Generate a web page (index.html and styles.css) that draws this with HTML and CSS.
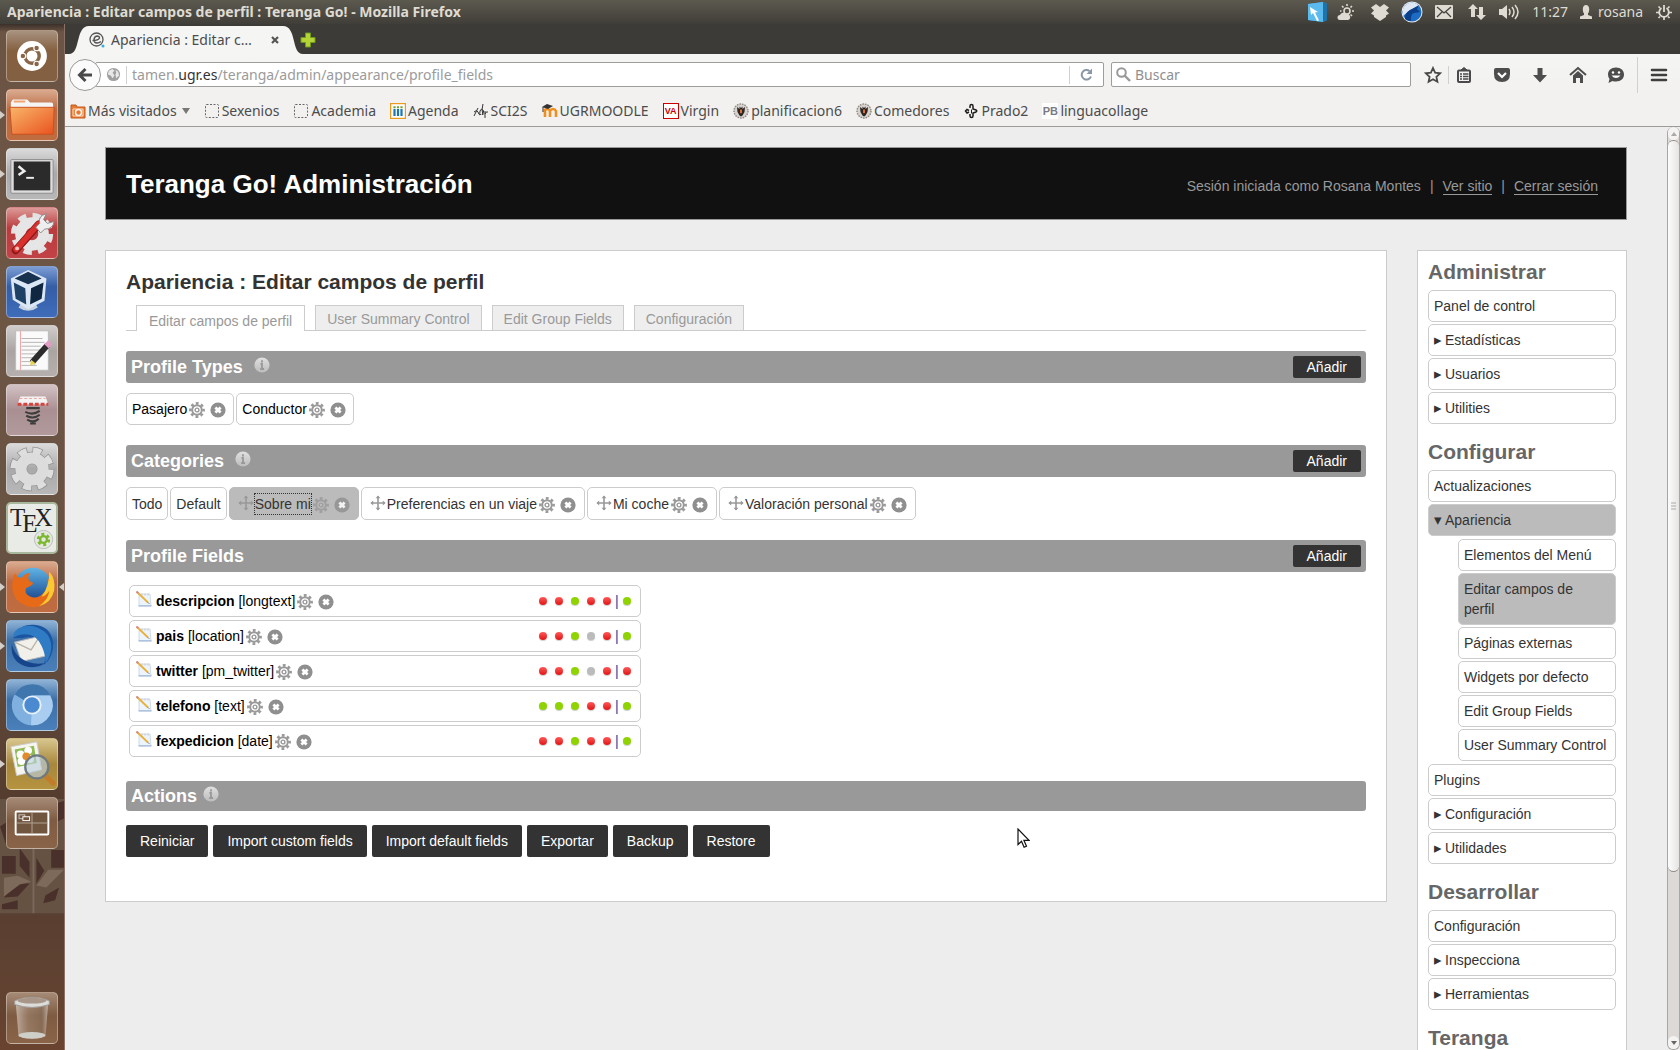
FILE: index.html
```html
<!DOCTYPE html>
<html lang="es">
<head>
<meta charset="utf-8">
<title>Apariencia : Editar campos de perfil : Teranga Go!</title>
<link rel="stylesheet" href="styles.css">
</head>
<body>
<svg class="defs" aria-hidden="true">
  <defs>
    <linearGradient id="gInfo" x1="0" y1="0" x2="0" y2="1"><stop offset="0" stop-color="#e0e0e0"/><stop offset="1" stop-color="#bcbcbc"/></linearGradient>
    <linearGradient id="gOrange" x1="0" y1="0" x2="1" y2="1"><stop offset="0" stop-color="#f9b56a"/><stop offset="1" stop-color="#e9531f"/></linearGradient>
    <linearGradient id="gBlue" x1="0" y1="0" x2="0" y2="1"><stop offset="0" stop-color="#5fb3e4"/><stop offset="1" stop-color="#123c86"/></linearGradient>
    <linearGradient id="gCup" x1="0" y1="0" x2="1" y2="0"><stop offset="0" stop-color="#d8d0c8" stop-opacity=".7"/><stop offset=".4" stop-color="#b09a86" stop-opacity=".4"/><stop offset=".8" stop-color="#8d7763" stop-opacity=".5"/><stop offset="1" stop-color="#d8d0c8" stop-opacity=".7"/></linearGradient>
  </defs>
  <symbol id="i-gear" viewBox="0 0 16 16"><circle cx="8" cy="8" r="6.6" fill="none" stroke="#999" stroke-width="2.6" stroke-dasharray="2.8 2.384" stroke-dashoffset="1.4"/><circle cx="8" cy="8" r="4.8" fill="none" stroke="#999" stroke-width="2"/><circle cx="8" cy="8" r="1.9" fill="none" stroke="#999" stroke-width="1.4"/></symbol>
  <symbol id="i-del" viewBox="0 0 16 16"><circle cx="8" cy="8" r="7.6" fill="#8f8f8f"/><path d="M5.4 5.4l5.2 5.2M10.6 5.4l-5.2 5.2" stroke="#fff" stroke-width="2.8"/></symbol>
  <symbol id="i-info" viewBox="0 0 16 16"><circle cx="8" cy="8" r="7.6" fill="url(#gInfo)"/><path d="M8 3.2v2.2M6.4 6.8H8v5M6.2 12h3.800" stroke="#999" stroke-width="1.8" fill="none"/></symbol>
  <symbol id="i-move" viewBox="0 0 16 16"><path d="M8 1v14M1 8h14" stroke="#999" stroke-width="1.6"/><path d="M5.6 3.2L8 .4l2.4 2.8zM5.6 12.8L8 15.6l2.4-2.8zM3.2 5.6L.4 8l2.8 2.4zM12.8 5.6L15.6 8l-2.8 2.4z" fill="#999"/></symbol>
  <symbol id="i-note" viewBox="0 0 16 16"><path d="M3 3h11l1 12H3z" fill="#eef4fb" stroke="#c5d3e4" stroke-width=".8"/><path d="M2.5 14.8h13" stroke="#a8bfdc" stroke-width="1.4"/><path d="M6 2.5v2M9 2.5v2M12 2.5v2" stroke="#c9c9c9"/><path d="M1 1l11 10.5" stroke="#e8b13c" stroke-width="1.8"/><path d="M.4.4l1.8 1.8" stroke="#d98b8b" stroke-width="2"/><path d="M12 11.5l1.2 1.2" stroke="#555"/></symbol>
  <symbol id="i-crest" viewBox="0 0 16 16"><circle cx="8" cy="8" r="7.5" fill="#d6d2ce"/><circle cx="8" cy="8" r="7" fill="none" stroke="#8d8782" stroke-width="1.4" stroke-dasharray="1.4 1.2"/><path d="M4 4l2.500 2V3.500L8 5l1.500-1.500V6L12 4l-.5 5-2 3.500L8 13.500l-1.500-1L4.500 9z" fill="#2d2522"/><path d="M7 6.500h2v3l-1 1-1-1z" fill="#d9703a"/></symbol>
  <symbol id="i-blank" viewBox="0 0 16 16"><rect x="1.500" y="1.500" width="13" height="13" rx="1" fill="none" stroke="#666" stroke-dasharray="2 1.500"/></symbol>
</svg>

<header class="panel">
  <div class="panel-title">Apariencia : Editar campos de perfil : Teranga Go! - Mozilla Firefox</div>
  <div class="tray">
    <svg width="22" height="22" viewBox="0 0 22 22"><path d="M2 3l15-2 4 2v16l-4 2-15-2z" fill="#2f9bd8"/><path d="M2 3l15-2v20L2 19z" fill="#5bbbee"/><path d="M17 1l4 2v16l-4 2z" fill="#1d74ad"/><path d="M4 6l8 5-3 .5 4 8-2 .5-4-8-2 2z" fill="#fff"/></svg>
    <svg width="18" height="18" viewBox="0 0 18 18" class="t-weather"><circle cx="10" cy="8" r="3" fill="none" stroke="#dfdbd2" stroke-width="1.600"/><path d="M10 1v2M5 3l1.500 1.500M15 3l-1.500 1.500M17 8h-2M15 13l-1.500-1.500M3 8h1.500" stroke="#dfdbd2" stroke-width="1.600"/><path d="M3 17a2.500 2.500 0 010-5 3.500 3.500 0 016-1 3 3 0 012 6z" fill="#dfdbd2"/></svg>
    <svg width="18" height="18" viewBox="0 0 18 18" class="t-box"><path d="M5 1l4 3 4-3 5 3.500-3 3 3 3-3 2V14l-6 4-6-4v-1.500l-3-2 3-3-3-3z" fill="#dfdbd2"/></svg>
    <svg width="22" height="22" viewBox="0 0 22 22" class="t-wolf"><circle cx="11" cy="11" r="10.500" fill="#e6edf5"/><circle cx="11" cy="11" r="9.500" fill="#1c6cc4"/><path d="M2 8a9.500 9.500 0 0112-6c2 1 3 2 4 3L9 9l-7 6z" fill="#dfe8f2"/><path d="M4 18c0-6 3-8 7-10l7-4-2 4 3 3-6 1c-3 1-3 4-3 8-2 0-5-1-6-2z" fill="#0b3f8a"/></svg>
    <svg width="18" height="14" viewBox="0 0 18 14" class="t-mail"><rect width="18" height="14" rx="1" fill="#dfdbd2"/><path d="M2 2l7 6 7-6M2 12l5-5M16 12l-5-5" stroke="#45433d" stroke-width="1.300" fill="none"/></svg>
    <svg width="18" height="18" viewBox="0 0 18 18" class="t-net"><path d="M5 1l5 5H7v8H3V6H0zM13 17l-5-5h3V4h4v8h3z" fill="#dfdbd2"/></svg>
    <svg width="20" height="16" viewBox="0 0 20 16" class="t-vol"><path d="M0 5h3l5-4v14l-5-4H0z" fill="#dfdbd2"/><path d="M10 5q2 3 0 6M13 3q4 5 0 10M16 1q6 7 0 14" stroke="#dfdbd2" stroke-width="1.500" fill="none"/></svg>
    <span class="t-clock">11:27</span>
    <svg width="14" height="14" viewBox="0 0 14 14" class="t-user"><ellipse cx="7" cy="4.500" rx="3.200" ry="4.500" fill="#dfdbd2"/><path d="M5 8h4v2l4 1.500V14H1v-2.500L5 10z" fill="#dfdbd2"/></svg>
    <span class="t-name">rosana</span>
    <svg width="16" height="16" viewBox="0 0 16 16" class="t-power"><path d="M5.500 4a4.800 4.800 0 105 0M8 1v7" fill="none" stroke="#dfdbd2" stroke-width="1.800"/><path d="M2.500 2.500L4 4M13.500 2.500L12 4M0 8.500h3M13 8.500h3M2.500 14L4 12.500M13.500 14L12 12.500M8 13v3" stroke="#dfdbd2" stroke-width="1.700"/></svg>
  </div>
</header>

<div class="desktop">
  <nav class="dock" aria-label="Lanzador">
    <svg class="mosaic" viewBox="0 0 65 120" aria-hidden="true"><path d="M0 0h65v116H0z" fill="#665243"/><path d="M2 58h14v18H2zM20 50l10 14v16l-10-12zM52 52h13v18H52zM37 60l8 13-8 13zM14 86l-10 14 14-1 12-13zM46 98l14-8-4 13-12 3zM2 107l16-4v9H2zM0 28l12-8 6 18-12 8zM34 16l14 10-6 18-10-12zM52 6l13-4v18l-9 4z" fill="#49302a"/><path d="M18 78l14 6-12 3-16 12V80zM37 88l12-16h16l-18 18zM18 20l14-12v22l-10 12z" fill="#7d6a5b"/><path d="M34 4v112" stroke="#7b6859" stroke-width="2"/></svg>
    <button class="tile t-brown" aria-label="Inicio"><svg viewBox="0 0 52 52"><circle cx="26" cy="26" r="15.500" fill="#fff"/><circle cx="26" cy="26" r="7.500" fill="none" stroke="#8a6648" stroke-width="3.600"/><g fill="#8a6648" stroke="#fff" stroke-width="1.200"><circle cx="16.500" cy="26" r="2.900"/><circle cx="30.800" cy="17.600" r="2.900"/><circle cx="30.800" cy="34.400" r="2.900"/></g></svg></button>
    <button class="tile t-orange run" aria-label="Archivos"><svg viewBox="0 0 52 52"><path d="M4 13l2-3h15l3 3h22q2 0 2 2v4H4z" fill="#f5f5f5"/><path d="M7 12h12" stroke="#f2a36c" stroke-width="2"/><path d="M3 18h46l-1 28H5z" fill="url(#gOrange)" stroke="#c9501c"/></svg></button>
    <button class="tile t-grey run" aria-label="Terminal"><svg viewBox="0 0 52 52"><rect x="4" y="11" width="44" height="35" rx="1" fill="#ddd" stroke="#8a8a8a"/><rect x="7" y="13" width="38" height="30" fill="#2b2b2b"/><path d="M12 18l6 5-6 4" stroke="#eee" stroke-width="2.600" fill="none"/><path d="M20 30h8" stroke="#eee" stroke-width="2"/></svg></button>
    <button class="tile t-red" aria-label="Configuración del sistema"><svg viewBox="0 0 52 52"><circle cx="26" cy="27" r="18" fill="none" stroke="#e2e2e2" stroke-width="8" stroke-dasharray="8 6.137"/><circle cx="26" cy="27" r="12" fill="none" stroke="#e6e6e6" stroke-width="11"/><path d="M9 44l24-27" stroke="#8f1516" stroke-width="8" stroke-linecap="round"/><path d="M9.500 43l23-26" stroke="#d8302c" stroke-width="6" stroke-linecap="round"/><path d="M30 20l4-4q-2-8 7-10l-3 6 4 4 7-2q-1 8-10 8l-4 4z" fill="#eee" stroke="#888"/><circle cx="10.500" cy="42" r="2" fill="#f6c5c0"/></svg></button>
    <button class="tile t-blue" aria-label="VirtualBox"><svg viewBox="0 0 52 52"><path d="M17 34l-5 8q10 7 20 0l-5-8z" fill="#c6d3e2"/><path d="M22 3l19 9-2 23-17 9L6 34 4 12z" fill="#dbe7f4"/><path d="M22 5l14 7-14 6L8 12z" fill="#16324f"/><path d="M7 16l12 6 1 17-11-6z" fill="#1d4266"/><path d="M38 16l-13 6-1 17 12-6z" fill="#0f2740"/></svg></button>
    <button class="tile t-silver" aria-label="Editor de textos"><svg viewBox="0 0 52 52"><rect x="9" y="5" width="34" height="41" fill="#fafafa" stroke="#bbb"/><path d="M14 5v41" stroke="#f0a0a0"/><path d="M15 13h22M15 17h24M15 21h20M15 25h23M15 29h16M15 33h15M15 37h14M15 41h16" stroke="#b4b4b4"/><path d="M26 38l16-18" stroke="#2c2c2c" stroke-width="6"/><path d="M41 21l4-4" stroke="#e39ac4" stroke-width="6"/><path d="M24 41l1-6 5 4z" fill="#e6d34f"/></svg></button>
    <button class="tile t-pink" aria-label="Resorte"><svg viewBox="0 0 52 52"><path d="M14 12h26l3 8H11z" fill="#f3f3f3"/><path d="M11 20h32" stroke="#d9423c" stroke-width="3" stroke-dasharray="4 2"/><path d="M13 14h27" stroke="#efa09c" stroke-dasharray="3 2"/><path d="M20 24h14M19 28q8 4 15-1M20 32q8 4 14-1M21 36q7 4 12-1M24 40h6" stroke="#3d3d3d" stroke-width="2.200" fill="none"/></svg></button>
    <button class="tile t-grey" aria-label="Preferencias"><svg viewBox="0 0 52 52"><circle cx="26" cy="26" r="19" fill="none" stroke="#8f8f8f" stroke-width="8.500" stroke-dasharray="9.500 5.423"/><circle cx="26" cy="26" r="11.500" fill="none" stroke="#999" stroke-width="13"/><circle cx="26" cy="26" r="18.500" fill="none" stroke="#dedede" stroke-width="8" stroke-dasharray="8 6.530" stroke-dashoffset="-.6"/><circle cx="26" cy="26" r="11.500" fill="none" stroke="#dcdcdc" stroke-width="11.500"/></svg></button>
    <button class="tile t-tex" aria-label="Texmaker"><span class="tex">T<span class="tex-e">E</span>X</span><svg viewBox="0 0 52 52"><circle cx="38" cy="38" r="9.500" fill="#e4e8e0" stroke="#bbb"/><circle cx="38" cy="38" r="5.500" fill="none" stroke="#7cb82f" stroke-width="3" stroke-dasharray="3 2.760"/><circle cx="38" cy="38" r="3.500" fill="none" stroke="#7cb82f" stroke-width="2.400"/></svg></button>
    <button class="tile t-orange run active" aria-label="Firefox"><svg viewBox="0 0 52 52"><circle cx="27" cy="25" r="19" fill="url(#gBlue)"/><path d="M8 12q-6 16 2 27 12 12 27 6 12-6 10-20-1-5-5-9 2 10-4 16-6 7-14 4-7-4-4-9 4-1 7-4 0-3-4-3-2-5 1-9-6 1-9 6-4-1-7-5z" fill="#e66a17"/><path d="M44 10q7 8 5 20-3 13-16 16 10-6 11-16-4 6-8 6 8-10 8-26z" fill="#f9c832"/></svg></button>
    <button class="tile t-blue2 run" aria-label="Thunderbird"><svg viewBox="0 0 52 52"><path d="M6 18Q12 3 28 4q17 1 20 18 1 15-10 24 4-12 0-20-8-12-22-8z" fill="#1c56a3"/><path d="M8 22l26-6 8 20-27 6z" fill="#f2f0ea" stroke="#bbb"/><path d="M8 22l17 8 9-14" fill="none" stroke="#b8b3a8" stroke-width="1.300"/><path d="M6 18q0-9 10-12 14-4 26 8 9 14-2 30 0-10-4-18-6-14-20-12-7 1-10 4z" fill="#2f7cc5"/><path d="M5 24q-2 18 14 23 12 3 20-3-10 1-16-1Q8 38 5 24z" fill="#17458b"/></svg></button>
    <button class="tile t-blue2" aria-label="Chromium"><svg viewBox="0 0 52 52"><circle cx="26" cy="26" r="21" fill="#7fb0e0"/><path d="M26 26L8 15A21 21 0 0145 16H26z" fill="#3f76ae"/><path d="M26 26l-1 21a21 21 0 0020-31H28z" fill="#a9cdf0"/><circle cx="26" cy="26" r="10" fill="#e8f1fa"/><circle cx="26" cy="26" r="8" fill="#4b8ad0"/></svg></button>
    <button class="tile t-gold run" aria-label="Visor de imágenes"><svg viewBox="0 0 52 52"><path d="M4 8l27-5 5 29-26 6z" fill="#f6f6f0" stroke="#ccc"/><path d="M8 11l20-4 3 18-20 4z" fill="#8fbb55"/><g fill="#fff"><circle cx="14" cy="16" r="4"/><circle cx="22" cy="12" r="4"/><circle cx="24" cy="21" r="4"/><circle cx="15" cy="23" r="4"/></g><circle cx="20" cy="18" r="4" fill="#e38a2b"/><path d="M40 38l8 8" stroke="#c47b2a" stroke-width="5" stroke-linecap="round"/><circle cx="31" cy="29" r="12" fill="#bcd0dc" fill-opacity=".65" stroke="#6f7a80" stroke-width="2.400"/></svg></button>
    <button class="tile t-brown2" aria-label="Áreas de trabajo"><svg viewBox="0 0 52 52"><rect x="9" y="14" width="34" height="24" rx="1" fill="#70553f" stroke="#fff" stroke-width="2"/><path d="M26 15v22M10 26h32" stroke="#b3a597"/><rect x="12.500" y="17.500" width="6" height="4" fill="none" stroke="#cfc6bd"/><rect x="16.500" y="19.500" width="7" height="4" fill="#70553f" stroke="#fff"/></svg></button>
    <button class="tile t-brown2 trash" aria-label="Papelera"><svg viewBox="0 0 52 52"><path d="M9 9l3 36q14 6 28 0l3-36z" fill="url(#gCup)"/><ellipse cx="26" cy="44" rx="14" ry="3.500" fill="#cfcfca"/><path d="M8 8q18-7 36 0v4q-18 6-36 0z" fill="#dcdcda" stroke="#9e9a95"/><ellipse cx="26" cy="8" rx="15" ry="3" fill="#a89788"/></svg></button>
  </nav>

  <main class="browser">
    <div class="tabbar">
      <div class="tab">
        <svg class="edge" width="22" height="28" viewBox="0 0 22 28"><path d="M0 28C12 28 6 0 20 0h2v28z" fill="#f5f5f4"/></svg>
        <div class="tab-body">
          <svg width="16" height="16" viewBox="0 0 16 16"><circle cx="7.500" cy="7.500" r="6.500" fill="none" stroke="#555" stroke-width="1.300"/><path d="M3.500 8.500q6 0 7-2.500 0-2-2.500-2-3 .5-3 4 0 3 3 3 2 0 4-1.500" fill="none" stroke="#555" stroke-width="1.400"/><circle cx="14" cy="14" r="1.500" fill="#35b0dc"/></svg>
          <span class="tab-text">Apariencia : Editar c…</span>
          <button class="close" aria-label="Cerrar pestaña"><svg width="8" height="8" viewBox="0 0 8 8"><path d="M1 1l6 6M7 1L1 7" stroke="#555" stroke-width="2.200"/></svg></button>
        </div>
        <svg class="edge" width="22" height="28" viewBox="0 0 22 28"><path d="M22 28C10 28 16 0 2 0H0v28z" fill="#f5f5f4"/></svg>
      </div>
      <button class="newtab" aria-label="Nueva pestaña"><svg width="16" height="16" viewBox="0 0 16 16"><path d="M5.500 1h5v4.500H15v5h-4.500V15h-5v-4.500H1v-5h4.500z" fill="#b5d334" stroke="#6d9a1e"/></svg></button>
    </div>

    <div class="toolbar">
      <button class="back" aria-label="Atrás"><svg width="16" height="16" viewBox="0 0 16 16"><path d="M8.500 2L2.500 8l6 6M3 8h12" fill="none" stroke="#4a4a4a" stroke-width="3"/></svg></button>
      <div class="urlbar">
        <svg width="15" height="15" viewBox="0 0 16 16"><circle cx="8" cy="8" r="7" fill="#a0a0a0"/><path d="M3 4l4-2 2 2-2 2 2 3-2 3-2-3-3-1zM10 3l3 2 1 4-3 3-1-4 1-2z" fill="#e8e8e8"/></svg>
        <span class="sep"></span>
        <div class="url" role="textbox" aria-label="Dirección">tamen.<b>ugr.es</b>/teranga/admin/appearance/profile_fields</div>
        <span class="sep"></span>
        <button class="reload" aria-label="Recargar"><svg width="13" height="13" viewBox="0 0 13 13"><path d="M11 8.500A4.800 4.800 0 119.500 3" fill="none" stroke="#8a97a5" stroke-width="2"/><path d="M12 .5V6H6.500z" fill="#8a97a5"/></svg></button>
      </div>
      <label class="search"><svg width="15" height="15" viewBox="0 0 15 15"><circle cx="5.500" cy="5.500" r="4.300" fill="none" stroke="#999" stroke-width="2"/><path d="M8.500 8.500l5.500 5.500" stroke="#999" stroke-width="2.400"/></svg><input type="text" placeholder="Buscar" aria-label="Buscar"></label>
      <div class="tools">
        <button aria-label="Marcador"><svg viewBox="0 0 18 18"><path d="M9 2l2.100 4.700 5 .6-3.700 3.500 1 5L9 13.300l-4.400 2.500 1-5L1.900 7.300l5-.6z" fill="none" stroke="#4a4a4a" stroke-width="1.800"/></svg></button>
        <span class="sep"></span>
        <button aria-label="Lista"><svg viewBox="0 0 18 18"><rect x="3" y="4.500" width="12" height="11.500" rx="1" fill="none" stroke="#4a4a4a" stroke-width="2"/><path d="M6 4l3-2.500L12 4z" fill="#4a4a4a" stroke="#4a4a4a"/><path d="M5 8h2M8 8h5.500M5 10.500h2M8 10.500h5.500M5 13h2M8 13h5.500" stroke="#4a4a4a" stroke-width="1.300"/></svg></button>
        <button aria-label="Pocket"><svg viewBox="0 0 18 18"><path d="M1 4q0-2 2-2h12q2 0 2 2v4q0 8-8 8T1 8z" fill="#4d4d4d"/><path d="M5 7l4 4 4-4" fill="none" stroke="#fff" stroke-width="2.200"/></svg></button>
        <button aria-label="Descargas"><svg viewBox="0 0 18 18"><path d="M6.500 2h5v7H16l-7 7.500L2 9h4.500z" fill="#4d4d4d"/></svg></button>
        <button aria-label="Inicio"><svg viewBox="0 0 18 18"><path d="M1 9l8-7 8 7" fill="none" stroke="#4d4d4d" stroke-width="2"/><path d="M4 9.500l5-4.500 5 4.500V17h-3v-5H7v5H4z" fill="#4d4d4d"/></svg></button>
        <button aria-label="Hello"><svg viewBox="0 0 18 18"><path d="M9 1.500c5 0 8 3 8 7s-3 7-8 7q-2 0-3.500-.6L1.500 17l1-4Q1 11 1 8.500c0-4 3-7 8-7z" fill="#4d4d4d"/><circle cx="6" cy="6.500" r="1.200" fill="#fff"/><circle cx="12" cy="6.500" r="1.200" fill="#fff"/><path d="M4.500 9.500q4.500 5 9 0z" fill="#fff"/></svg></button>
        <span class="sep tall"></span>
        <button aria-label="Menú"><svg viewBox="0 0 18 18"><path d="M2 4h14M2 9h14M2 14h14" stroke="#3f3f3f" stroke-width="2.600" stroke-linecap="round"/></svg></button>
      </div>
    </div>

    <nav class="bookmarks" aria-label="Marcadores">
      <a href="#"><svg viewBox="0 0 16 16"><path d="M1 2h5l1 2h8v11H1z" fill="#e77a33" stroke="#c4591a"/><circle cx="8.500" cy="9.500" r="3" fill="none" stroke="#fff" stroke-width="1.400"/><path d="M3 6h10v7H3z" fill="none" stroke="#fbd9bf"/></svg>Más visitados<svg class="caret" viewBox="0 0 8 6"><path d="M0 0h8L4 6z" fill="#777"/></svg></a>
      <a href="#"><svg viewBox="0 0 16 16"><use href="#i-blank"/></svg>Sexenios</a>
      <a href="#"><svg viewBox="0 0 16 16"><use href="#i-blank"/></svg>Academia</a>
      <a href="#"><svg viewBox="0 0 16 16"><rect x=".5" y=".5" width="15" height="15" fill="#fff" stroke="#ea9a1c" stroke-width="1.400"/><path d="M4.500 6v7M8 6v7M11.500 6v7" stroke="#1c76b4" stroke-width="2.200"/><path d="M4.500 3.200v2M8 3.200v2M11.500 3.200v2" stroke="#6f9e3b" stroke-width="2.200"/></svg>Agenda</a>
      <a href="#"><svg viewBox="0 0 16 16"><path d="M1 13L5 5M1 9q3-3 4 0t2 3M8 12q-2-1-1-4t3-1-1 5M10 1Q8 7 10 12M12 8v7M12 11q1-3 3-2" fill="none" stroke="#333" stroke-width="1"/></svg>SCI2S</a>
      <a href="#"><svg viewBox="0 0 16 16"><path d="M3 14V8q0-2 2-2t3 2v6M8 8q1-2 3-2t3 2v6" fill="none" stroke="#f08f1d" stroke-width="2.600"/><path d="M0 4l5-3 6 2-5 3z" fill="#333"/><path d="M1 4v5" stroke="#333"/></svg>UGRMOODLE</a>
      <a href="#"><span class="fav va">VA</span>Virgin</a>
      <a href="#"><svg viewBox="0 0 16 16"><use href="#i-crest"/></svg>planificacion6</a>
      <a href="#"><svg viewBox="0 0 16 16"><use href="#i-crest"/></svg>Comedores</a>
      <a href="#"><svg viewBox="0 0 16 16"><path d="M7 5V3q0-1.500 1.500-1.500T10 3v3l3 1q1.500.8 0 2l-3 1v3q0 1.500-1.500 1.500T7 13v-2M6 9L4 10 2.500 8 4 6.500l2 1" fill="none" stroke="#1d1d1d" stroke-width="1.500"/><path d="M8.500 6.500v4" stroke="#1d1d1d"/></svg>Prado2</a>
      <a href="#"><span class="fav pb">PB</span>linguacollage</a>
    </nav>

    <div class="viewport">
      <div class="page">
        <header class="site-header">
          <h1>Teranga Go! Administración</h1>
          <div class="session"><span>Sesión iniciada como Rosana Montes</span><span>|</span><a href="#">Ver sitio</a><span>|</span><a href="#">Cerrar sesión</a></div>
        </header>

        <div class="columns">
          <section class="main-panel">
            <h2>Apariencia : Editar campos de perfil</h2>
            <nav class="tabs">
              <a class="selected" href="#">Editar campos de perfil</a>
              <a href="#">User Summary Control</a>
              <a href="#">Edit Group Fields</a>
              <a href="#">Configuración</a>
            </nav>

            <div class="bar"><h3>Profile Types</h3><svg class="info far"><use href="#i-info"/></svg><button class="btn small">Añadir</button></div>
            <div class="chips black">
              <div class="chip"><a href="#">Pasajero</a><svg><use href="#i-gear"/></svg><svg><use href="#i-del"/></svg></div>
              <div class="chip"><a href="#">Conductor</a><svg><use href="#i-gear"/></svg><svg><use href="#i-del"/></svg></div>
            </div>

            <div class="bar"><h3>Categories</h3><svg class="info far"><use href="#i-info"/></svg><button class="btn small">Añadir</button></div>
            <div class="chips">
              <div class="chip plain"><a href="#">Todo</a></div>
              <div class="chip plain"><a href="#">Default</a></div>
              <div class="chip drag on"><svg class="move"><use href="#i-move"/></svg><a href="#">Sobre mi</a><svg><use href="#i-gear"/></svg><svg><use href="#i-del"/></svg></div>
              <div class="chip drag"><svg class="move"><use href="#i-move"/></svg><a href="#">Preferencias en un viaje</a><svg><use href="#i-gear"/></svg><svg><use href="#i-del"/></svg></div>
              <div class="chip drag"><svg class="move"><use href="#i-move"/></svg><a href="#">Mi coche</a><svg><use href="#i-gear"/></svg><svg><use href="#i-del"/></svg></div>
              <div class="chip drag"><svg class="move"><use href="#i-move"/></svg><a href="#">Valoración personal</a><svg><use href="#i-gear"/></svg><svg><use href="#i-del"/></svg></div>
            </div>

            <div class="bar"><h3>Profile Fields</h3><button class="btn small">Añadir</button></div>
            <ul class="fields">
              <li><svg class="note"><use href="#i-note"/></svg><span><b>descripcion</b> [longtext]</span><svg><use href="#i-gear"/></svg><svg><use href="#i-del"/></svg><div class="dots"><i class="r"></i><i class="r"></i><i class="g"></i><i class="r"></i><i class="r"></i><span>|</span><i class="g"></i></div></li>
              <li><svg class="note"><use href="#i-note"/></svg><span><b>pais</b> [location]</span><svg><use href="#i-gear"/></svg><svg><use href="#i-del"/></svg><div class="dots"><i class="r"></i><i class="r"></i><i class="g"></i><i class="n"></i><i class="r"></i><span>|</span><i class="g"></i></div></li>
              <li><svg class="note"><use href="#i-note"/></svg><span><b>twitter</b> [pm_twitter]</span><svg><use href="#i-gear"/></svg><svg><use href="#i-del"/></svg><div class="dots"><i class="r"></i><i class="r"></i><i class="g"></i><i class="n"></i><i class="r"></i><span>|</span><i class="r"></i></div></li>
              <li><svg class="note"><use href="#i-note"/></svg><span><b>telefono</b> [text]</span><svg><use href="#i-gear"/></svg><svg><use href="#i-del"/></svg><div class="dots"><i class="g"></i><i class="g"></i><i class="g"></i><i class="r"></i><i class="r"></i><span>|</span><i class="g"></i></div></li>
              <li><svg class="note"><use href="#i-note"/></svg><span><b>fexpedicion</b> [date]</span><svg><use href="#i-gear"/></svg><svg><use href="#i-del"/></svg><div class="dots"><i class="r"></i><i class="r"></i><i class="g"></i><i class="r"></i><i class="r"></i><span>|</span><i class="g"></i></div></li>
            </ul>

            <div class="bar low"><h3>Actions</h3><svg class="info"><use href="#i-info"/></svg></div>
            <div class="actions">
              <button class="btn">Reiniciar</button><button class="btn">Import custom fields</button><button class="btn">Import default fields</button><button class="btn">Exportar</button><button class="btn">Backup</button><button class="btn">Restore</button>
            </div>
          </section>

          <aside class="side">
            <h2>Administrar</h2>
            <ul>
              <li><a href="#">Panel de control</a></li>
              <li><a href="#"><span class="mk">▸</span>Estadísticas</a></li>
              <li><a href="#"><span class="mk">▸</span>Usuarios</a></li>
              <li><a href="#"><span class="mk">▸</span>Utilities</a></li>
            </ul>
            <h2>Configurar</h2>
            <ul>
              <li><a href="#">Actualizaciones</a></li>
              <li><a class="on" href="#"><span class="mk">▾</span>Apariencia</a>
                <ul class="sub">
                  <li><a href="#">Elementos del Menú</a></li>
                  <li><a class="on" href="#">Editar campos de<br>perfil</a></li>
                  <li><a href="#">Páginas externas</a></li>
                  <li><a href="#">Widgets por defecto</a></li>
                  <li><a href="#">Edit Group Fields</a></li>
                  <li><a href="#">User Summary Control</a></li>
                </ul>
              </li>
              <li><a href="#">Plugins</a></li>
              <li><a href="#"><span class="mk">▸</span>Configuración</a></li>
              <li><a href="#"><span class="mk">▸</span>Utilidades</a></li>
            </ul>
            <h2>Desarrollar</h2>
            <ul>
              <li><a href="#">Configuración</a></li>
              <li><a href="#"><span class="mk">▸</span>Inspecciona</a></li>
              <li><a href="#"><span class="mk">▸</span>Herramientas</a></li>
            </ul>
            <h2>Teranga</h2>
          </aside>
        </div>
      </div>
      <div class="scrollbar" aria-hidden="true">
        <span class="sb-btn"><svg width="6" height="4" viewBox="0 0 6 4"><path d="M3 0l3 4H0z" fill="#aaa"/></svg></span>
        <span class="sb-thumb"><svg width="5" height="8" viewBox="0 0 5 8"><path d="M0 1h5M0 4h5M0 7h5" stroke="#aaa"/></svg></span>
        <span class="sb-track"></span>
        <span class="sb-btn"><svg width="6" height="4" viewBox="0 0 6 4"><path d="M0 0h6L3 4z" fill="#666"/></svg></span>
      </div>
    </div>
  </main>
</div>
<svg class="cursor" width="13" height="21" viewBox="0 0 13 21" aria-hidden="true"><path d="M1 1v15.500l3.500-3.300 2.600 6 2.400-1-2.600-5.900H12z" fill="#fff" stroke="#111" stroke-width="1.200"/></svg>
</body>
</html>
```
FILE: styles.css
```css
* { box-sizing: border-box; }
body {
  margin: 0;
  height: 100vh;
  display: flex;
  flex-direction: column;
  overflow: hidden;
  background: #ededed;
  font: 14px/20px "Liberation Sans", Arial, sans-serif;
  color: #333;
}
button { font: inherit; color: inherit; border: 0; padding: 0; background: none; }
a { color: inherit; text-decoration: none; }
ul { list-style: none; margin: 0; padding: 0; }
h1, h2, h3 { margin: 0; }
svg { display: block; flex: none; }
.defs { position: absolute; width: 0; height: 0; }

/* Desktop top panel */
.panel {
  display: flex;
  align-items: center;
  justify-content: space-between;
  flex: none;
  height: 24px;
  padding: 0 8px 0 7px;
  background: linear-gradient(#5c594f, #403e38);
  color: #dfdbd2;
  font: 14px/24px "Noto Sans", sans-serif;
}
.panel-title { font-weight: bold; }
.tray { display: flex; align-items: center; }
.t-weather { margin-left: 9px; }
.t-box { margin-left: 16px; }
.t-wolf { margin-left: 12px; }
.t-mail { margin-left: 12px; }
.t-net { margin-left: 15px; }
.t-vol { margin-left: 13px; }
.t-clock { margin-left: 13px; }
.t-user { margin-left: 11px; }
.t-name { margin-left: 5px; }
.t-power { margin-left: 13px; }

.desktop { display: flex; flex: 1; min-height: 0; }

/* Launcher */
.dock {
  position: relative;
  display: flex;
  flex-direction: column;
  gap: 7px;
  flex: none;
  width: 65px;
  padding: 6px 0 6px 6px;
  background: linear-gradient(#3a302a 0, #6b5444 8px, #6e5645 300px, #655041 600px, #52392c 800px, #5c4132 920px, #69432f 100%);
  border-right: 1px solid #8a7266;
}
.mosaic { position: absolute; left: 0; bottom: 132px; width: 64px; height: 120px; }
.tile {
  position: relative;
  flex: none;
  width: 52px;
  height: 52px;
  border: 1px solid rgba(255, 255, 255, .35);
  border-radius: 5px;
}
.tile svg { position: relative; width: 50px; height: 50px; }
.t-brown { background: linear-gradient(#a89280, #84603f 40%, #846043); }
.t-brown2 { background: linear-gradient(#a58a76, #7e5b42 45%, #8a6448); }
.t-orange { background: linear-gradient(#d9ab90, #bb6a42 40%, #c06c40); }
.t-grey { background: linear-gradient(#dadada, #a9a9a9 50%, #b8b8b8); }
.t-red { background: linear-gradient(#dd9a98, #b93b3e 40%, #c24346); }
.t-blue { background: linear-gradient(#7c9dd4, #345da5 40%, #3f6cba); }
.t-blue2 { background: linear-gradient(#8fb3d6, #3b6ea6 40%, #4a80ba); }
.t-silver { background: linear-gradient(#d0cccb, #aaa5a3 50%, #b5b0ae); }
.t-pink { background: linear-gradient(#d3c2c4, #a98f92 50%, #b29a9c); }
.t-tex { background: #e9ece6; border: 2px solid #a9b89c; }
.t-gold { background: linear-gradient(#d8c68e, #a8873c 50%, #b5933f); }
.t-tex svg { position: absolute; left: -1px; top: -1px; }
.tex { position: absolute; left: 2px; top: 0; display: flex; font: 25px/28px "Liberation Serif", serif; color: #222; }
.tex-e { margin: 6px -3px 0; }
.trash { margin-top: auto; }
.run::before {
  content: "";
  position: absolute;
  left: -7px;
  top: 21px;
  border: 4px solid transparent;
  border-left: 5px solid #d4cec8;
  border-right: 0;
}
.active::after {
  content: "";
  position: absolute;
  right: -7px;
  top: 21px;
  border: 4px solid transparent;
  border-right: 5px solid #d4cec8;
  border-left: 0;
}

/* Browser chrome */
.browser {
  display: flex;
  flex-direction: column;
  flex: 1;
  min-width: 0;
  background: #f2f1f0;
  font: 14px/20px "Noto Sans", sans-serif;
  color: #4c4c4c;
}
.tabbar {
  display: flex;
  align-items: flex-end;
  flex: none;
  height: 30px;
  padding-left: 4px;
  background: #3c3b37;
}
.tab { display: flex; width: 234px; }
.tab-body {
  display: flex;
  align-items: center;
  flex: 1;
  gap: 6px;
  background: #f5f5f4;
  margin: 0 -2px;
  min-width: 0;
}
.tab-text { flex: 1; white-space: nowrap; }
.close { margin-right: 4px; }
.newtab { margin: 0 0 6px -3px; }
.toolbar {
  display: flex;
  align-items: center;
  flex: none;
  height: 41px;
  padding: 0 12px 0 4px;
  background: linear-gradient(#f5f5f4, #f2f1f0);
}
.back {
  display: grid;
  place-items: center;
  z-index: 1;
  width: 32px;
  height: 32px;
  border: 1px solid #9a9a98;
  border-radius: 50%;
  background: #fbfbfb;
}
.urlbar, .search {
  display: flex;
  align-items: center;
  height: 25px;
  border: 1px solid #9d9d9b;
  border-radius: 2px;
  background: #fff;
}
.urlbar { flex: 1; margin-left: -6px; padding: 0 10px; gap: 5px; }
.sep { width: 1px; height: 18px; background: #d0d0ce; }
.url { flex: 1; color: #9b9b9b; }
.url b { font-weight: 400; color: #333; }
.reload { padding: 0 0 0 5px; }
.search { width: 300px; margin-left: 7px; padding: 0 4px; gap: 4px; }
.search input {
  flex: 1;
  min-width: 0;
  border: 0;
  padding: 0;
  background: none;
  font: inherit;
  color: #8a8a8a;
}
.search input::placeholder { color: #8f8f8f; opacity: 1; }
.tools { display: flex; align-items: center; gap: 20px; margin-left: 13px; }
.tools svg { width: 18px; height: 18px; }
.tools .sep { margin: 0 -14px; }
.tools .tall { height: 36px; margin: 0 -8px; }
.bookmarks {
  display: flex;
  align-items: center;
  gap: 14px;
  flex: none;
  height: 32px;
  padding: 0 5px;
  border-bottom: 1px solid #9c9b99;
  white-space: nowrap;
}
.bookmarks a { display: flex; align-items: center; gap: 2px; }
.bookmarks svg { width: 16px; height: 16px; }
.bookmarks .caret { width: 8px; height: 6px; margin-left: 3px; }
.fav { width: 16px; height: 16px; text-align: center; background: #fff; font: bold 9px/14px "Liberation Sans", sans-serif; }
.va { border: 1px solid #c00; color: #c00; }
.pb { font-size: 11px; line-height: 16px; color: #7b7b85; }

/* Page */
.viewport {
  display: flex;
  flex: 1;
  min-height: 0;
  background: #ededed;
  font: 14px/20px "Liberation Sans", Arial, sans-serif;
  color: #333;
}
.page { flex: 1; min-width: 0; overflow: hidden; padding: 20px 40px 0; }
.site-header {
  display: flex;
  align-items: center;
  justify-content: space-between;
  height: 73px;
  padding: 0 28px 0 20px;
  background: #111;
  border: 1px solid #999;
  color: #999;
}
.site-header h1 { color: #fff; font-size: 26px; line-height: 32px; }
.session { display: flex; gap: 9px; padding-top: 6px; line-height: 16px; }
.session a { border-bottom: 1px solid #999; }
.columns { display: flex; align-items: flex-start; gap: 30px; margin-top: 30px; }
.main-panel {
  flex: 1;
  min-width: 0;
  padding: 20px 20px 44px;
  background: #fff;
  border: 1px solid #ccc;
}
.main-panel > h2 { font-size: 21px; line-height: 22px; margin-bottom: 12px; }
.tabs {
  display: flex;
  gap: 10px;
  height: 26px;
  margin-bottom: 20px;
  padding-left: 10px;
  border-bottom: 1px solid #ccc;
  color: #999;
}
.tabs a {
  height: 25px;
  padding: 0 11px;
  line-height: 26px;
  border: 1px solid #ccc;
  border-bottom: 0;
  background: #eee;
}
.tabs .selected { height: 26px; padding: 0 12px; line-height: 30px; background: #fff; }
.bar {
  display: flex;
  align-items: center;
  height: 32px;
  padding: 0 5px;
  border-radius: 3px;
  background: #999;
}
.bar.low { height: 30px; }
.bar h3 { color: #fff; font-size: 18px; line-height: 20px; }
.bar .btn { margin-left: auto; }
.info { width: 16px; height: 16px; margin: 0 0 4px 6px; }
.info.far { margin-left: 11px; }
.btn {
  height: 32px;
  padding: 0 14px;
  border-radius: 2px;
  background: #333;
  color: #fff;
  line-height: 20px;
}
.btn.small { height: 22px; }
.chips { display: flex; flex-wrap: wrap; gap: 2px; padding: 10px 0 20px; }
.chips.black { color: #000; }
.chip {
  display: flex;
  align-items: center;
  min-height: 32px;
  padding: 0 7px 0 5px;
  border: 1px solid #ccc;
  border-radius: 5px;
}
.chip.plain { padding: 0 5px; }
.chip.drag { min-height: 33px; padding: 0 8px; }
.chip svg, .fields svg { width: 16px; height: 16px; margin: 2px 0 0 2px; }
.chip svg + svg, .fields svg + svg { margin-left: 5px; }
.chip .move { margin: 0 1px 2px 0; }
.chip.on { background: #bbb; border-color: #bbb; }
.chip.on a { outline: 1px dotted #333; }
.chip.on svg { opacity: .8; }
.chip.on .move { opacity: 1; }
.fields { display: grid; gap: 3px; width: 512px; max-width: 100%; margin: 13px 0 24px 3px; color: #000; }
.fields li {
  display: flex;
  align-items: center;
  height: 32px;
  padding: 0 9px 0 6px;
  border: 1px solid #ccc;
  border-radius: 5px;
}
.fields .note { margin: 0 4px 4px 0; }
.dots { display: flex; align-items: center; gap: 8px; margin-left: auto; }
.dots i { width: 8px; height: 8px; border-radius: 50%; box-shadow: 0 1px 1px #ccc; }
.dots span { width: 4px; margin: 0 -4px; color: #0054a7; }
.dots .r { background: linear-gradient(#ff5a5a, #e01414); }
.dots .g { background: #8fd400; }
.dots .n { background: #bbb; }
.actions { display: flex; gap: 5px; margin-top: 14px; }

/* Sidebar */
.side {
  flex: none;
  width: 210px;
  min-height: 900px;
  padding: 10px 10px 40px;
  background: #fff;
  border: 1px solid #ccc;
}
.side h2 { color: #666; font-size: 21px; line-height: 22px; margin-bottom: 7px; }
.side > ul { margin-bottom: 17px; }
.side ul { display: grid; gap: 2px; }
.side li a {
  display: block;
  padding: 5px;
  border: 1px solid #ccc;
  border-radius: 5px;
}
.side .sub { margin: 3px 0 1px 30px; }
.side li a.on { background: #bbb; }
.mk { display: inline-block; width: 11px; font: 15px/12px "DejaVu Sans", sans-serif; }

/* Scrollbar */
.scrollbar {
  display: flex;
  flex-direction: column;
  flex: none;
  width: 13px;
  border: 1px solid #a8a5a2;
  border-top: 0;
  border-radius: 6px;
  background: #dcd9d7;
}
.sb-btn { display: grid; place-items: center; flex: none; height: 13px; border-radius: 6px; background: #f4f3f2; }
.sb-thumb {
  display: grid;
  place-items: center;
  flex: 732;
  border: 1px solid #8f8c89;
  border-width: 1px 0;
  border-radius: 6px;
  background: linear-gradient(90deg, #fcfcfc, #e6e4e2);
}
.sb-track { flex: 165; }
.cursor { position: absolute; left: 1017px; top: 828px; }
```
